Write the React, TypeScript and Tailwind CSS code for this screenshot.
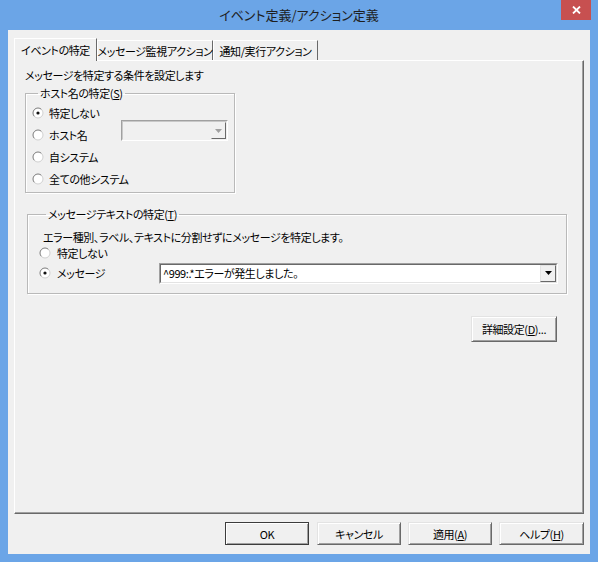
import React from 'react';

const font = "font-['Noto_Sans_CJK_JP',sans-serif] [font-feature-settings:'palt']";

const Radio: React.FC<{ checked?: boolean }> = ({ checked }) => (
  <svg width="12" height="12" viewBox="0 0 12 12" className="shrink-0">
    <circle cx="6" cy="6" r="5" fill="#fff" />
    <path d="M2.46 9.54 A5 5 0 0 1 9.54 2.46" stroke="#7a7a7a" fill="none" />
    <path d="M9.54 2.46 A5 5 0 0 1 2.46 9.54" stroke="#d0d0d0" fill="none" />
    {checked && <circle cx="6" cy="6" r="1.6" fill="#111" />}
  </svg>
);

const RadioItem: React.FC<{ label: string; checked?: boolean; gap?: string }> = ({ label, checked, gap = 'gap-[5px]' }) => (
  <label className={`flex items-center whitespace-nowrap ${gap}`}>
    <Radio checked={checked} />
    <span>{label}</span>
  </label>
);

const Arrow: React.FC<{ color: string }> = ({ color }) => (
  <svg width="7" height="4" viewBox="0 0 7 4">
    <path d="M0 0 H7 L3.5 4 Z" fill={color} />
  </svg>
);

const Button: React.FC<{ children: React.ReactNode; primary?: boolean; className?: string }> = ({ children, primary, className = '' }) => (
  <button
    className={`flex items-center justify-center whitespace-nowrap border ${
      primary ? 'border-[#3c3c3c]' : 'border-t-[#e3e3e3] border-l-[#e3e3e3] border-r-[#696969] border-b-[#696969]'
    } bg-[#f0f0f0] shadow-[inset_1px_1px_0_#fff,inset_-1px_-1px_0_#a0a0a0] text-black ${className}`}
  >
    {children}
  </button>
);

const App: React.FC = () => {
  return (
    <div className={`flex h-[562px] w-[598px] flex-col bg-[#6ba5e7] ${font}`}>
      {/* title bar */}
      <div className="grid h-[30px] grid-cols-[1fr_auto_1fr] items-start">
        <div />
        <div className="whitespace-nowrap pt-[7px] text-[13px] leading-[16px] text-[#1e1e1e]">イベント定義/アクション定義</div>
        <div className="flex justify-end pr-[7px]">
          <div className="flex h-[20px] w-[30px] items-center justify-center bg-[#c75050]">
            <svg width="9" height="8" viewBox="0 0 9 8">
              <path d="M1 0.5 L8 7.5 M8 0.5 L1 7.5" stroke="#fff" strokeWidth="1.8" />
            </svg>
          </div>
        </div>
      </div>

      {/* client area */}
      <div className="mx-[8px] mb-[8px] flex flex-1 flex-col bg-[#f0f0f0] px-[6px] text-[11px] leading-[14px] tracking-[-0.4px] text-black">
        {/* tabs */}
        <div className="flex h-[30px] items-end whitespace-nowrap pt-[8px]">
          <div className="relative z-10 -mb-[1px] flex h-[23px] w-[83px] items-center justify-center border-l border-t border-r border-l-white border-t-white border-r-[#696969] bg-[#f0f0f0] pb-[1px]">
            イベントの特定
          </div>
          <div className="flex h-[20px] w-[116px] items-center justify-center border-l border-t border-r border-l-white border-t-white border-r-[#696969] pt-[1px]">
            メッセージ監視アクション
          </div>
          <div className="flex h-[20px] w-[105px] items-center justify-center border-l border-t border-r border-l-white border-t-white border-r-[#696969] pt-[1px]">
            通知/実行アクション
          </div>
        </div>

        {/* tab panel */}
        <div className="flex h-[454px] w-[570px] flex-col border border-t-white border-l-white border-r-[#696969] border-b-[#696969] pl-[10px] pt-[7px] shadow-[inset_-1px_-1px_0_#a0a0a0]">
          <div>メッセージを特定する条件を設定します</div>

          <fieldset className="mt-[4px] w-[210px] border border-[#b9b9b9] pb-[2px] pl-[6px] shadow-[inset_1px_1px_0_#fff,1px_1px_0_#fff]">
            <legend className="ml-[6px] px-[2px]">
              ホスト名の特定(<span className="underline">S</span>)
            </legend>
            <div className="mt-[2px] grid grid-cols-[89px_auto] auto-rows-[22px] items-center">
              <div className="col-span-2">
                <RadioItem label="特定しない" checked />
              </div>
              <RadioItem label="ホスト名" />
              <div className="-mt-[4px] flex h-[21px] w-[107px] self-start border border-t-[#a0a0a0] border-l-[#a0a0a0] border-r-white border-b-white">
                <div className="flex flex-1 justify-end border border-t-[#c8c8c8] border-l-[#c8c8c8] border-r-[#f0f0f0] border-b-[#f0f0f0] bg-[#f0f0f0]">
                  <div className="flex w-[15px] items-center justify-center border border-t-[#f0f0f0] border-l-[#f0f0f0] border-r-[#696969] border-b-[#696969] bg-[#f0f0f0]">
                    <Arrow color="#a0a0a0" />
                  </div>
                </div>
              </div>
              <div className="col-span-2">
                <RadioItem label="自システム" />
              </div>
              <div className="col-span-2">
                <RadioItem label="全ての他システム" />
              </div>
            </div>
          </fieldset>

          <fieldset className="ml-[2px] mt-[14px] w-[540px] border border-[#b9b9b9] pb-[9px] pl-[11px] shadow-[inset_1px_1px_0_#fff,1px_1px_0_#fff]">
            <legend className="ml-[7px] px-[2px]">
              メッセージテキストの特定(<span className="underline">T</span>)
            </legend>
            <div className="pl-[4px] pt-[9px]">エラー種別、ラベル、テキストに分割せずにメッセージを特定します。</div>
            <div className="flex h-[18px] items-center">
              <RadioItem label="特定しない" gap="gap-[6px]" />
            </div>
            <div className="flex h-[22px] items-center">
              <div className="w-[120px]">
                <RadioItem label="メッセージ" checked gap="gap-[6px]" />
              </div>
              <div className="flex h-[21px] w-[399px] border border-t-[#a0a0a0] border-l-[#a0a0a0] border-r-white border-b-white">
                <div className="flex flex-1 items-center border border-t-[#696969] border-l-[#696969] border-r-[#e3e3e3] border-b-[#e3e3e3] bg-white">
                  <span className="flex-1 whitespace-nowrap pl-[2px]">^999:.*エラーが発生しました。</span>
                  <div className="flex h-full w-[16px] items-center justify-center border border-t-[#e3e3e3] border-l-[#e3e3e3] border-r-[#696969] border-b-[#696969] bg-[#f0f0f0]">
                    <Arrow color="#000" />
                  </div>
                </div>
              </div>
            </div>
          </fieldset>

          <div className="mt-[22px] flex justify-end pr-[26px]">
            <Button className="h-[26px] w-[86px]">
              詳細設定(<span className="underline">D</span>)...
            </Button>
          </div>
        </div>

        {/* bottom buttons */}
        <div className="mt-[8px] flex justify-end gap-[7px]">
          <Button primary className="mr-[1px] h-[23px] w-[84px]">
            OK
          </Button>
          <Button className="h-[23px] w-[84px]">キャンセル</Button>
          <Button className="h-[23px] w-[84px]">
            適用(<span className="underline">A</span>)
          </Button>
          <Button className="h-[23px] w-[85px]">
            ヘルプ(<span className="underline">H</span>)
          </Button>
        </div>
      </div>
    </div>
  );
};

export default App;
